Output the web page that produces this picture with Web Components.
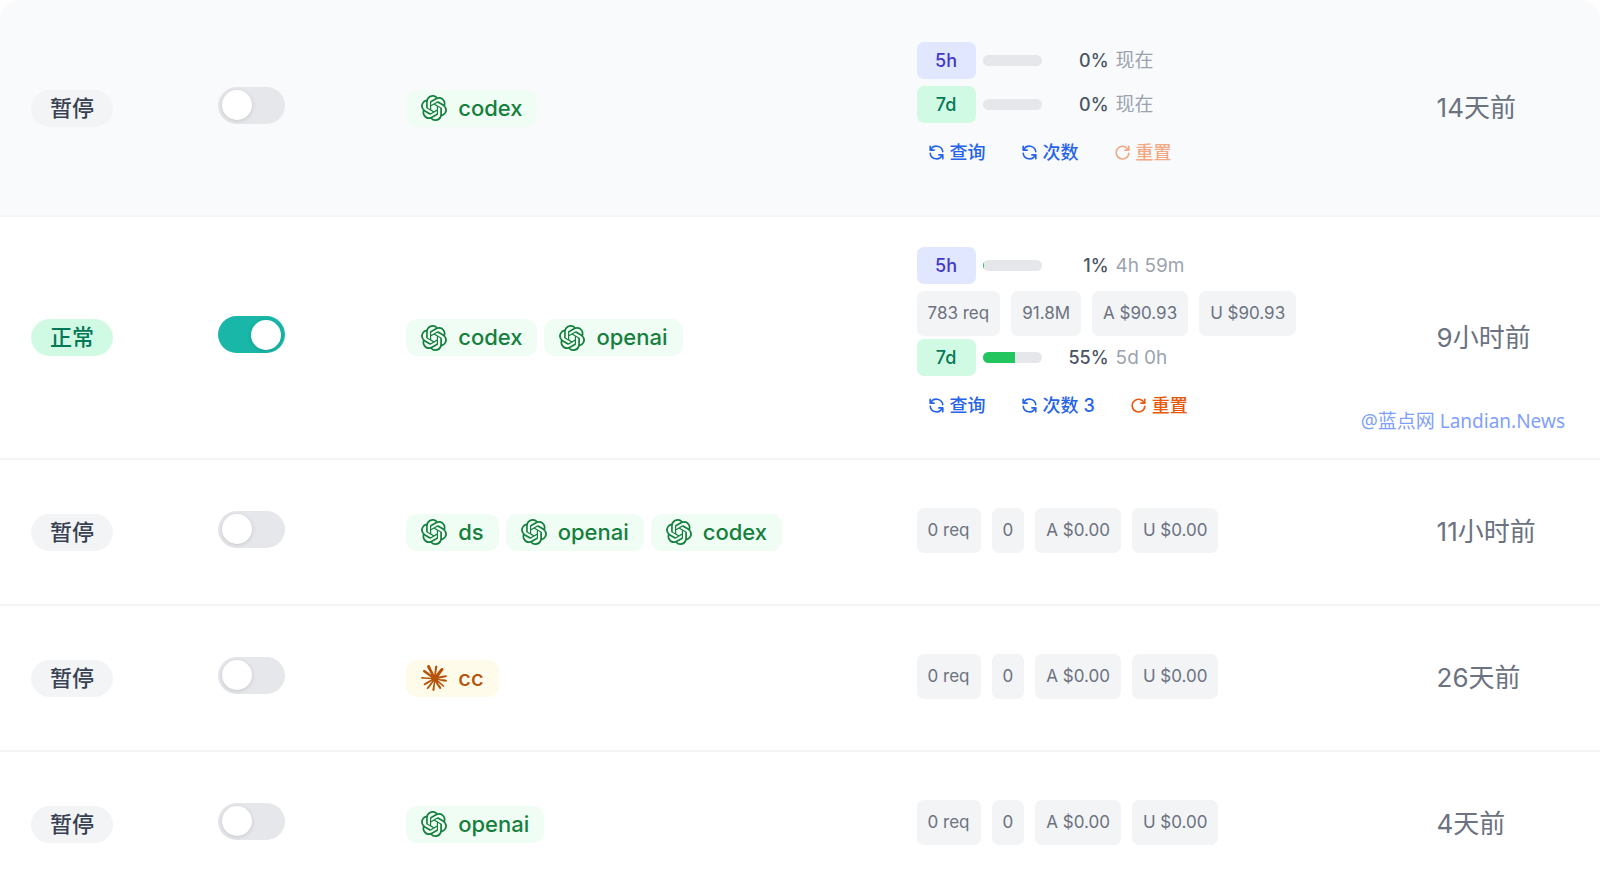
<!DOCTYPE html>
<html lang="zh-CN">
<head>
<meta charset="utf-8">
<meta name="viewport" content="width=device-width, initial-scale=1">
<title>账号列表</title>
<style>
  body {
    margin: 0;
    background: #fff;
    font-family: Inter, "Noto Sans CJK SC", sans-serif;
    color: #374151;
  }
</style>
</head>
<body>
<account-table></account-table>
<water-mark>@蓝点网 Landian.News</water-mark>

<script>
const ICONS = {
  openai: '<path fill="currentColor" d="M22.2819 9.8211a5.9847 5.9847 0 0 0-.5157-4.9108 6.0462 6.0462 0 0 0-6.5098-2.9A6.0651 6.0651 0 0 0 4.9807 4.1818a5.9847 5.9847 0 0 0-3.9977 2.9 6.0462 6.0462 0 0 0 .7427 7.0966 5.98 5.98 0 0 0 .511 4.9107 6.051 6.051 0 0 0 6.5146 2.9001A5.9847 5.9847 0 0 0 13.2599 24a6.0557 6.0557 0 0 0 5.7718-4.2058 5.9894 5.9894 0 0 0 3.9977-2.9001 6.0557 6.0557 0 0 0-.7475-7.0729zm-9.022 12.6081a4.4755 4.4755 0 0 1-2.8764-1.0408l.1419-.0804 4.7783-2.7582a.7948.7948 0 0 0 .3927-.6813v-6.7369l2.02 1.1686a.071.071 0 0 1 .038.052v5.5826a4.504 4.504 0 0 1-4.4945 4.4944zm-9.6607-4.1254a4.4708 4.4708 0 0 1-.5346-3.0137l.142.0852 4.783 2.7582a.7712.7712 0 0 0 .7806 0l5.8428-3.3685v2.3324a.0804.0804 0 0 1-.0332.0615L9.74 19.9502a4.4992 4.4992 0 0 1-6.1408-1.6464zM2.3408 7.8956a4.485 4.485 0 0 1 2.3655-1.9728V11.6a.7664.7664 0 0 0 .3879.6765l5.8144 3.3543-2.0201 1.1685a.0757.0757 0 0 1-.071 0l-4.8303-2.7865A4.504 4.504 0 0 1 2.3408 7.872zm16.5963 3.8558L13.1038 8.364 15.1192 7.2a.0757.0757 0 0 1 .071 0l4.8303 2.7913a4.4944 4.4944 0 0 1-.6765 8.1042v-5.6772a.79.79 0 0 0-.407-.667zm2.0107-3.0231l-.142-.0852-4.7735-2.7818a.7759.7759 0 0 0-.7854 0L9.409 9.2297V6.8974a.0662.0662 0 0 1 .0284-.0615l4.8303-2.7866a4.4992 4.4992 0 0 1 6.6802 4.66zM8.3065 12.863l-2.02-1.1638a.0804.0804 0 0 1-.038-.0567V6.0742a4.4992 4.4992 0 0 1 7.3757-3.4537l-.142.0805L8.704 5.459a.7948.7948 0 0 0-.3927.6813zm1.0976-2.3654l2.602-1.4998 2.6069 1.4998v2.9994l-2.5974 1.4997-2.6067-1.4997Z"/>',
  claude: '<path fill="currentColor" d="m4.7144 15.9555 4.7174-2.6471.079-.2307-.079-.1275h-.2307l-.7893-.0486-2.6956-.0729-2.3375-.0971-2.2646-.1214-.5707-.1215-.5343-.7042.0546-.3522.4797-.3218.686.0608 1.5179.1032 2.2767.1578 1.6514.0972 2.4468.255h.3886l.0546-.1579-.1336-.0971-.1032-.0972L6.973 9.8356l-2.55-1.6879-1.3356-.9714-.7225-.4918-.3643-.4614-.1578-1.0078.6557-.7225.8803.0607.2246.0607.8925.686 1.9064 1.4754 2.4893 1.8336.3643.3035.1457-.1032.0182-.0728-.164-.2733-1.3539-2.4467-1.445-2.4893-.6435-1.032-.17-.6194c-.0607-.255-.1032-.4674-.1032-.7285L6.287.1335 6.6997 0l.9957.1336.419.3642.6192 1.4147 1.0018 2.2282 1.5543 3.0296.4553.8985.2429.8318.091.255h.1579v-.1457l.1275-1.706.2368-2.0947.2307-2.6957.0789-.7589.3764-.9107.7468-.4918.5828.2793.4797.686-.0668.4433-.2853 1.8517-.5586 2.9021-.3643 1.9429h.2125l.2429-.2429.9835-1.3053 1.6514-2.0643.7286-.8196.85-.9046.5464-.4311h1.0321l.759 1.1293-.34 1.1657-1.0625 1.3478-.8804 1.1414-1.2628 1.7-.7893 1.36.0729.1093.1882-.0183 2.8535-.607 1.5421-.2794 1.8396-.3157.8318.3886.091.3946-.3278.8075-1.967.4857-2.3072.4614-3.4364.8136-.0425.0304.0486.0607 1.5482.1457.6618.0364h1.621l3.0175.2247.7892.522.4736.6376-.079.4857-1.2142.6193-1.6393-.3886-3.825-.9107-1.3113-.3279h-.1822v.1093l1.0929 1.0686 2.0035 1.8092 2.5075 2.3314.1275.5768-.3218.4554-.34-.0486-2.2039-1.6575-.85-.7468-1.9246-1.621h-.1275v.17l.4432.6496 2.3436 3.5214.1214 1.0807-.17.3521-.6071.2125-.6679-.1214-1.3721-1.9246L14.38 17.959l-1.1414-1.9428-.1397.079-.674 7.2552-.3156.3703-.7286.2793-.6071-.4614-.3218-.7468.3218-1.4753.3886-1.9246.3157-1.53.2853-1.9004.17-.6314-.0121-.0425-.1397.0182-1.4328 1.9672-2.1796 2.9446-1.7243 1.8456-.4128.164-.7164-.3704.0667-.6618.4008-.5889 2.386-3.0357 1.4389-1.882.929-1.0868-.0062-.1579h-.0546l-6.3385 4.1164-1.1293.1457-.4857-.4554.0608-.7467.2307-.2429 1.9064-1.3114Z"/>',
  refresh: '<path d="M4 4v5h.582m15.356 2A8.001 8.001 0 0 0 4.582 9m0 0H9m11 11v-5h-.581m0 0a8.003 8.003 0 0 1-15.357-2m15.357 2H15"/>',
  reset: '<path d="M20 4v5h-5M19.4 9A8 8 0 1 0 20 13"/>'
};

const svg = (name) => `
  <svg viewBox="0 0 24 24" fill="none" aria-hidden="true">${ICONS[name]}</svg>`;

class StatusBadge extends HTMLElement {
  constructor() {
    super();
    this.attachShadow({ mode: 'open' });
  }

  connectedCallback() {
    this.shadowRoot.innerHTML = `
      <style>
        :host {
          display: inline-block;
          padding: 0 19px;
          border-radius: 19px;
          background: #f3f4f6;
          color: #374151;
          font-size: 22px;
          font-weight: 500;
          line-height: 37px;
          vertical-align: middle;
        }

        :host([type="active"]) {
          background: #d1fae5;
          color: #047857;
        }
      </style>
      <slot></slot>
    `;
  }
}

class ToggleSwitch extends HTMLElement {
  constructor() {
    super();
    this.attachShadow({ mode: 'open' });
  }

  connectedCallback() {
    this.shadowRoot.innerHTML = `
      <style>
        :host {
          display: block;
          padding-bottom: 6px;
        }

        input {
          appearance: none;
          display: flex;
          align-items: center;
          box-sizing: border-box;
          width: 67px;
          height: 37px;
          margin: 0;
          padding: 0 4px;
          border-radius: 19px;
          background: #e5e7eb;
          cursor: pointer;
        }

        input::before {
          content: "";
          width: 30px;
          height: 30px;
          border-radius: 50%;
          background: #fff;
          box-shadow: 0 1px 4px rgba(0, 0, 0, 0.14);
        }

        input:checked {
          justify-content: flex-end;
          background: #18b7a7;
        }
      </style>
      <input type="checkbox" role="switch" aria-label="调度" ${this.hasAttribute('on') ? 'checked' : ''}>
    `;
  }
}

class GroupTag extends HTMLElement {
  constructor() {
    super();
    this.attachShadow({ mode: 'open' });
  }

  connectedCallback() {
    this.shadowRoot.innerHTML = `
      <style>
        :host {
          display: inline-flex;
          align-items: center;
          gap: 11px;
          padding: 0 15px;
          border-radius: 11px;
          background: #f0fdf4;
          color: #15803d;
          font-size: 22px;
          font-weight: 500;
          line-height: 37px;
        }

        :host([platform="claude"]) {
          background: #fffbeb;
          color: #b45309;
        }

        svg {
          width: 26px;
          height: 26px;
        }
      </style>
      ${svg(this.getAttribute('platform'))}
      <slot></slot>
    `;
  }
}

class UsageWindow extends HTMLElement {
  constructor() {
    super();
    this.attachShadow({ mode: 'open' });
  }

  connectedCallback() {
    const percent = this.getAttribute('percent');
    const label = this.getAttribute('label');

    this.shadowRoot.innerHTML = `
      <style>
        :host {
          display: flex;
          align-items: center;
          gap: 7px;
          height: 37px;
          font-size: 18px;
          line-height: 37px;
        }

        .label {
          width: 59px;
          border-radius: 7px;
          background: #e0e7ff;
          color: #4338ca;
          font-weight: 500;
          text-align: center;
        }

        :host([label="7d"]) .label {
          background: #d1fae5;
          color: #047857;
        }

        .track {
          width: 59px;
          height: 11px;
          border-radius: 6px;
          background: #e5e7eb;
          overflow: hidden;
        }

        .fill {
          width: ${percent}%;
          height: 100%;
          background: #22c55e;
        }

        .percent {
          width: 60px;
          color: #4b5563;
          font-weight: 500;
          text-align: right;
        }

        .remaining {
          color: #9ca3af;
          font-size: 19px;
        }
      </style>
      <span class="label">${label}</span>
      <div class="track" role="progressbar" aria-label="${label}" aria-valuenow="${percent}">
        <div class="fill"></div>
      </div>
      <span class="percent">${percent}%</span>
      <span class="remaining"><slot></slot></span>
    `;
  }
}

class StatChip extends HTMLElement {
  constructor() {
    super();
    this.attachShadow({ mode: 'open' });
  }

  connectedCallback() {
    this.shadowRoot.innerHTML = `
      <style>
        :host {
          display: block;
          padding: 0 11px;
          border-radius: 7px;
          background: #f3f4f6;
          color: #6b7280;
          font-size: 17px;
          line-height: 45px;
          white-space: nowrap;
        }
      </style>
      <slot></slot>
    `;
  }
}

class UsageAction extends HTMLElement {
  constructor() {
    super();
    this.attachShadow({ mode: 'open' });
  }

  connectedCallback() {
    this.shadowRoot.innerHTML = `
      <style>
        :host {
          display: block;
        }

        button {
          display: flex;
          align-items: center;
          gap: 4px;
          padding: 0 10px;
          border: 0;
          background: none;
          color: #2563eb;
          font: inherit;
          font-size: 18px;
          font-weight: 500;
          line-height: 37px;
          white-space: nowrap;
          cursor: pointer;
        }

        :host([icon="reset"]) button {
          color: #ea580c;
        }

        button:disabled {
          opacity: 0.5;
          cursor: not-allowed;
        }

        svg {
          width: 19px;
          height: 19px;
          stroke: currentColor;
          stroke-width: 2;
          stroke-linecap: round;
          stroke-linejoin: round;
        }
      </style>
      <button type="button" ${this.hasAttribute('disabled') ? 'disabled' : ''}>
        ${svg(this.getAttribute('icon'))}<span><slot></slot></span>
      </button>
    `;
  }
}

class WaterMark extends HTMLElement {
  constructor() {
    super();
    this.attachShadow({ mode: 'open' });
  }

  connectedCallback() {
    this.shadowRoot.innerHTML = `
      <style>
        :host {
          position: absolute;
          top: 407px;
          right: 35px;
          color: #7f9fff;
          font-family: "Noto Sans", "Noto Sans CJK SC", sans-serif;
          font-size: 19px;
          line-height: 28px;
          pointer-events: none;
        }
      </style>
      <slot></slot>
    `;
  }
}

const EMPTY_STATS = ['0 req', '0', 'A $0.00', 'U $0.00'];

const ACCOUNTS = [
  {
    highlighted: true,
    groups: ['codex'],
    windows: [
      { label: '5h', percent: 0, remaining: '现在' },
      { label: '7d', percent: 0, remaining: '现在' }
    ],
    count: '次数',
    lastUsed: '14天前'
  },
  {
    active: true,
    groups: ['codex', 'openai'],
    windows: [
      { label: '5h', percent: 1, remaining: '4h 59m', stats: ['783 req', '91.8M', 'A $90.93', 'U $90.93'] },
      { label: '7d', percent: 55, remaining: '5d 0h' }
    ],
    count: '次数 3',
    canReset: true,
    lastUsed: '9小时前'
  },
  { groups: ['ds', 'openai', 'codex'], lastUsed: '11小时前' },
  { groups: ['cc'], platform: 'claude', lastUsed: '26天前' },
  { groups: ['openai'], lastUsed: '4天前' }
];

class AccountTable extends HTMLElement {
  constructor() {
    super();
    this.attachShadow({ mode: 'open' });
  }

  connectedCallback() {
    this.render();
  }

  renderStats(stats) {
    return `<div class="stats">${stats.map((s) => `<stat-chip>${s}</stat-chip>`).join('')}</div>`;
  }

  renderUsage(account) {
    if (!account.windows) {
      return this.renderStats(EMPTY_STATS);
    }

    const windows = account.windows.map((w) => `
      <usage-window label="${w.label}" percent="${w.percent}">${w.remaining}</usage-window>
      ${w.stats ? this.renderStats(w.stats) : ''}
    `).join('');

    return `
      ${windows}
      <div class="actions">
        <usage-action icon="refresh">查询</usage-action>
        <usage-action icon="refresh">${account.count}</usage-action>
        <usage-action icon="reset" ${account.canReset ? '' : 'disabled'}>重置</usage-action>
      </div>
    `;
  }

  renderRow(account) {
    const platform = account.platform || 'openai';

    return `
      <tr class="${account.highlighted ? 'highlighted' : ''}">
        <td><status-badge type="${account.active ? 'active' : 'paused'}">${account.active ? '正常' : '暂停'}</status-badge></td>
        <td><toggle-switch ${account.active ? 'on' : ''}></toggle-switch></td>
        <td>
          <div class="groups">
            ${account.groups.map((g) => `<group-tag platform="${platform}">${g}</group-tag>`).join('')}
          </div>
        </td>
        <td>${this.renderUsage(account)}</td>
        <td class="time">${account.lastUsed}</td>
      </tr>
    `;
  }

  render() {
    this.shadowRoot.innerHTML = `
      <style>
        :host {
          display: block;
          max-height: 100vh;
          border-radius: 20px 20px 0 0;
          overflow: hidden;
        }

        table {
          width: 100%;
          border-spacing: 0;
          table-layout: fixed;
        }

        .col-status { width: 11.7%; }
        .col-toggle { width: 11.75%; }
        .col-groups { width: 31.9%; }
        .col-usage { width: 32.5%; }

        tr {
          height: 146px;
        }

        tr.highlighted {
          height: 217px;
          background: #f9fafc;
        }

        td {
          padding: 30px 0 30px 31px;
          border-bottom: 2px solid #f3f4f6;
          vertical-align: middle;
        }

        tr.highlighted td {
          padding-top: 31px;
        }

        .groups {
          display: flex;
          flex-wrap: wrap;
          gap: 7px;
        }

        usage-window {
          margin-bottom: 7px;
        }

        .stats {
          display: flex;
          gap: 11px;
          margin-bottom: 3px;
        }

        .actions {
          display: flex;
          gap: 14px;
          margin: 11px 0 4px;
        }

        .time {
          color: #6b7280;
          font-size: 26px;
          line-height: 38px;
        }
      </style>

      <table>
        <colgroup>
          <col class="col-status">
          <col class="col-toggle">
          <col class="col-groups">
          <col class="col-usage">
          <col>
        </colgroup>
        <tbody>
          ${ACCOUNTS.map((account) => this.renderRow(account)).join('')}
        </tbody>
      </table>
    `;
  }
}

customElements.define('status-badge', StatusBadge);
customElements.define('toggle-switch', ToggleSwitch);
customElements.define('group-tag', GroupTag);
customElements.define('usage-window', UsageWindow);
customElements.define('stat-chip', StatChip);
customElements.define('usage-action', UsageAction);
customElements.define('water-mark', WaterMark);
customElements.define('account-table', AccountTable);
</script>
</body>
</html>
